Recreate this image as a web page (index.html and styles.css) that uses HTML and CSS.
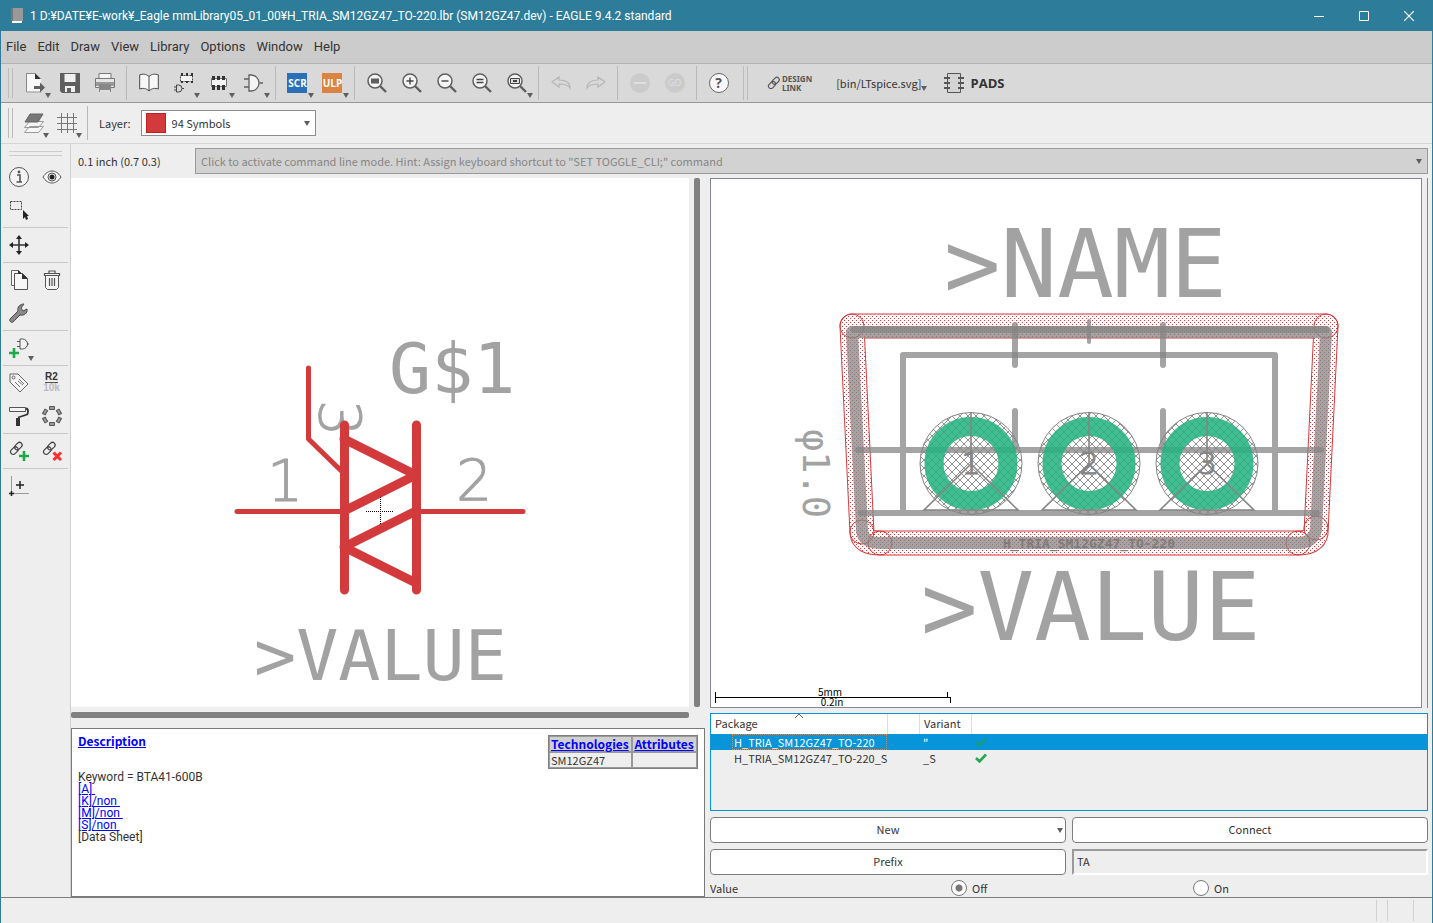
FILE: index.html
```html
<!DOCTYPE html>
<html lang="en">
<head>
<meta charset="utf-8">
<title>EAGLE 9.4.2 standard</title>
<link rel="stylesheet" href="styles.css">
</head>
<body>
<svg class="defs" aria-hidden="true">
  <defs>
    <symbol id="down" viewBox="0 0 6 5"><path d="M0 0h6L3 5z" fill="#5f5f5f"/></symbol>
    <symbol id="lens" viewBox="0 0 20 20"><circle cx="8" cy="8" r="7" fill="#f4f4f4" stroke="#5f5f5f" stroke-width="1.5"/><path d="M13 13l6 6" stroke="#5f5f5f" stroke-width="2.4"/></symbol>
    <symbol id="gate" viewBox="0 0 20 20"><path d="M5 2h2a8 8 0 0 1 0 16H5z" fill="#f4f4f4" stroke="#5f5f5f" stroke-width="1.3"/><path d="M0 6h5M0 14h5M15.500 10H19" stroke="#5f5f5f" stroke-width="1.5"/></symbol>
    <symbol id="chain" viewBox="0 0 16 16"><g fill="none" stroke-width="1.3" stroke="currentColor"><rect x="5.500" y="2.700" width="9" height="5.6" rx="2.8" transform="rotate(-45 10 5.500)"/><rect x="1.200" y="7.500" width="9" height="5.6" rx="2.8" transform="rotate(-45 5.700 10.300)"/></g></symbol>
    <symbol id="tick" viewBox="0 0 12 10"><path d="M1 5l3.500 3.500L11 1.500" fill="none" stroke="currentColor" stroke-width="2.600"/></symbol>
    <pattern id="dots" width="4" height="4" patternUnits="userSpaceOnUse"><path d="M0 0h1v1H0zM2 2h1v1H2z" fill="#d33a3c"/></pattern>
    <pattern id="hatch" width="8" height="8" patternUnits="userSpaceOnUse"><path d="M0 0l8 8M8 0L0 8" stroke="#858585" stroke-width=".9"/></pattern>
  </defs>
</svg>
<div class="window">
  <header class="titlebar">
    <svg width="12" height="16" viewBox="0 0 12 16"><path d="M0 0h12v13H0z" fill="#999"/><path d="M0 0h2v13H0z" fill="#777"/><path d="M1 13h10v2H1z" fill="#fff"/></svg>
    <h1 class="title">1 D:¥DATE¥E-work¥_Eagle mmLibrary05_01_00¥H_TRIA_SM12GZ47_TO-220.lbr (SM12GZ47.dev) - EAGLE 9.4.2 standard</h1>
    <div class="winbtns">
      <button aria-label="Minimize"><svg width="10" height="10"><path d="M0 5.500h10" stroke="#fff"/></svg></button>
      <button aria-label="Maximize"><svg width="10" height="10"><path d="M.5.5h9v9h-9z" fill="none" stroke="#fff"/></svg></button>
      <button aria-label="Close"><svg width="10" height="10"><path d="M0 0l10 10M10 0L0 10" stroke="#fff" stroke-width="1.200"/></svg></button>
    </div>
  </header>
  <nav class="menubar">
    <button>File</button><button>Edit</button><button>Draw</button><button>View</button><button>Library</button><button>Options</button><button>Window</button><button>Help</button>
  </nav>
  <div class="toolbar">
    <span class="grip"></span>
    <button class="tool" aria-label="Open"><svg width="20" height="20" viewBox="0 0 20 20"><path d="M1 .5h10l5 5V19.500H1z" fill="#f8f8f8"/><path d="M1 .5h9M1.500 0v19H16M10 .5" fill="none" stroke="#8a8a8a"/><path d="M10 0l6 6h-6z" fill="#333"/><path d="M9 13h6V9.500l5 5-5 5V16H9z" fill="#5f5f5f"/></svg><svg class="dd"><use href="#down"/></svg></button>
    <button class="tool" aria-label="Save"><svg width="20" height="20" viewBox="0 0 20 20"><path d="M0 0h20v20H2l-2-2z" fill="#5f5f5f"/><path d="M4.500 1h11v8h-11zM5 13h10v6H5z" fill="#f0f0f0"/><path d="M7 15h4v4H7z" fill="#5f5f5f"/></svg></button>
    <button class="tool" aria-label="Print"><svg width="20" height="20" viewBox="0 0 20 20"><path d="M4 .5h12V6H4z" fill="#f4f4f4" stroke="#777"/><path d="M.5 5.500h19v9H.5z" fill="#e5e5e5" stroke="#777"/><path d="M1 9h18v4H1z" fill="#999"/><path d="M4 11h12v8H4z" fill="#888"/><path d="M5 17h10v2H5z" fill="#ddd"/></svg></button>
    <span class="sep"></span>
    <button class="tool" aria-label="Library"><svg width="20" height="20" viewBox="0 0 20 20"><path d="M10 3.500C7 .8 4 .8.7 1.800V16C4 15 7 15 10 18c3-3 6-3 9.300-2V1.800C16 .8 13 .8 10 3.500zV18" fill="#f8f8f8" stroke="#4a4a4a"/></svg></button>
    <button class="tool" aria-label="Device"><svg width="20" height="20" viewBox="0 0 20 20"><path d="M6.500 2.500h12v6h-12z" fill="#f4f4f4" stroke="#444" stroke-dasharray="2 1"/><path d="M7 0h2v3H7zM12 0h2v3h-2zM17 0h2v3h-2zM7 8h2v2H7zM12 8h2v2h-2zM17 8h2v2h-2z" fill="#333"/><path d="M2.500 12h2a3.500 3.500 0 0 1 0 7h-2zM0 14h2M0 17h2M8 15.500h2" fill="none" stroke="#444"/></svg><svg class="dd"><use href="#down"/></svg></button>
    <button class="tool" aria-label="Package"><svg width="20" height="20" viewBox="0 0 20 20"><path d="M2.500 5.500h15v8h-15z" fill="#f4f4f4" stroke="#777"/><path d="M3 3h3v4H3zM8 3h3v4H8zM13 3h3v4h-3zM3 12h3v5H3zM8 12h3v5H8zM13 12h3v5h-3z" fill="#333"/></svg><svg class="dd"><use href="#down"/></svg></button>
    <button class="tool" aria-label="Symbol"><svg width="20" height="20"><use href="#gate"/></svg><svg class="dd"><use href="#down"/></svg></button>
    <span class="sep"></span>
    <button class="tool tag scr">SCR<svg class="dd"><use href="#down"/></svg></button>
    <button class="tool tag ulp">ULP<svg class="dd"><use href="#down"/></svg></button>
    <span class="sep"></span>
    <button class="tool" aria-label="Zoom to fit"><svg width="20" height="20"><use href="#lens"/><path d="M4 5.500h8v5H4z" fill="#5f5f5f"/></svg></button>
    <button class="tool" aria-label="Zoom in"><svg width="20" height="20"><use href="#lens"/><path d="M4.500 8h7M8 4.500v7" stroke="#444" stroke-width="1.400"/></svg></button>
    <button class="tool" aria-label="Zoom out"><svg width="20" height="20"><use href="#lens"/><path d="M4.500 8h7" stroke="#444" stroke-width="1.400"/></svg></button>
    <button class="tool" aria-label="Redraw"><svg width="20" height="20"><use href="#lens"/><path d="M4.500 6.500h7M4.500 9.500h7" stroke="#444" stroke-width="1.400"/></svg></button>
    <button class="tool" aria-label="Zoom select"><svg width="20" height="20"><use href="#lens"/><path d="M3.500 5.500h9v5h-9z" fill="#ddd" stroke="#444"/><path d="M6 7h4v2H6z" fill="#444"/></svg><svg class="dd"><use href="#down"/></svg></button>
    <span class="sep"></span>
    <button class="tool" aria-label="Undo" disabled><svg width="20" height="14" viewBox="0 0 20 14"><path d="M1 6l7-5v3c7 0 11 3 11 8-2-3-5-4-11-4v3z" fill="none" stroke="#b5b5b5" stroke-width="1.200"/></svg></button>
    <button class="tool" aria-label="Redo" disabled><svg width="20" height="14" viewBox="0 0 20 14"><path d="M19 6l-7-5v3C5 4 1 7 1 12c2-3 5-4 11-4v3z" fill="none" stroke="#b5b5b5" stroke-width="1.200"/></svg></button>
    <span class="sep"></span>
    <button class="tool" aria-label="Stop" disabled><svg width="20" height="20"><circle cx="10" cy="10" r="10" fill="#cbcbcb"/><path d="M4 10h12" stroke="#e0e0e0" stroke-width="2"/></svg></button>
    <button class="tool" disabled><span class="go">GO</span></button>
    <span class="sep"></span>
    <button class="tool"><span class="help">?</span></button>
    <span class="grip wide"></span>
    <button class="design"><svg width="14" height="14"><use href="#chain"/></svg><span>DESIGN<br>LINK</span></button>
    <button class="spice">[bin/LTspice.svg]<svg class="dd"><use href="#down"/></svg></button>
    <button class="pads"><svg width="20" height="20" viewBox="0 0 20 20"><path d="M3.500.5h13v19h-13z" fill="#d4d4d4" stroke="#555"/><path d="M0 5h6M0 10h6M0 15h6M14 5h6M14 10h6M14 15h6" stroke="#555" stroke-width="2"/></svg>PADS</button>
  </div>
  <div class="toolbar second">
    <span class="grip"></span>
    <button class="tool" aria-label="Layers"><svg width="20" height="20" viewBox="0 0 20 20"><path d="M.5 19.500l5-6h14l-5 6zM.5 14.500l5-6h14l-5 6z" fill="#f6f6f6" stroke="#999"/><path d="M1 9l5-8h13l-5 8z" fill="#777" stroke="#666"/></svg><svg class="dd"><use href="#down"/></svg></button>
    <button class="tool" aria-label="Grid"><svg width="20" height="20"><path d="M0 4.500h20M0 10.500h20M0 16.500h20M4.500 0v20M10.500 0v20M16.500 0v20" stroke="#777"/></svg><svg class="dd"><use href="#down"/></svg></button>
    <span class="sep"></span>
    <label for="layer">Layer:</label>
    <div class="combo"><span class="swatch"></span><select id="layer"><option>94 Symbols</option></select><svg class="arrow"><use href="#down"/></svg></div>
  </div>
  <div class="body">
    <aside class="side">
      <span class="hgrip"></span>
      <div class="group">
        <button aria-label="Info"><svg width="20" height="20" viewBox="1 1 20 20"><circle cx="11" cy="11" r="9.500" fill="#f4f4f4" stroke="#555"/><path d="M9 9h3v7M8.500 16h5.500" fill="none" stroke="#555" stroke-width="1.600"/><circle cx="11" cy="6" r="1.400" fill="#555"/></svg></button>
        <button aria-label="Show"><svg width="20" height="20" viewBox="0 0 20 20"><path d="M1 10c5-8 13-8 18 0-5 8-13 8-18 0z" fill="#f8f8f8" stroke="#555"/><circle cx="10" cy="10" r="4" fill="none" stroke="#555"/><circle cx="10" cy="10" r="2.500" fill="#222"/></svg></button>
        <button aria-label="Group"><svg width="20" height="20" viewBox="0 0 20 20"><path d="M1.500 1.500h11v8h-11z" fill="none" stroke="#444" stroke-dasharray="2 1"/><path d="M14 10v9l2-2 1 3 2-1-1-3h2z" fill="#222"/></svg></button>
      </div>
      <div class="group">
        <button aria-label="Move"><svg width="20" height="20" viewBox="0 0 20 20"><path d="M2 10h16M10 2v16" stroke="#333" stroke-width="1.600"/><path d="M0 10l4-3v6zM20 10l-4-3v6zM10 0L7 4h6zM10 20l-3-4h6z" fill="#222"/></svg></button>
      </div>
      <div class="group">
        <button aria-label="Copy"><svg width="20" height="20" viewBox="0 0 20 20"><path d="M2.500.5h7l3 3v12h-10z" fill="#f8f8f8" stroke="#666"/><path d="M5.500 3.500h8l5 5v11h-13z" fill="#f8f8f8" stroke="#555"/><path d="M13 3l6 6h-6zM9 0l4 4H9z" fill="#333"/></svg></button>
        <button aria-label="Delete"><svg width="20" height="20" viewBox="0 0 20 20"><path d="M3.500 5.500h13v12l-2 2h-9l-2-2z" fill="#f4f4f4" stroke="#555"/><path d="M2.500 3.500h15v2h-15zM7 3V1h6v2M7.500 8v8M10 8v8M12.500 8v8" fill="none" stroke="#555" stroke-width="1.200"/></svg></button>
        <button aria-label="Change"><svg width="20" height="20" viewBox="0 0 20 20"><path d="M1 16l8-8c-1-4 2-7 6-7l-3 4 2 3 4-2c1 4-3 7-7 6l-7 7c-2 1-4-1-3-3z" fill="#8a8a8a" stroke="#4a4a4a"/></svg></button>
      </div>
      <div class="group">
        <button aria-label="Add"><svg width="20" height="20" viewBox="0 0 20 20"><path d="M11 1h2.500a5 5 0 0 1 0 10H11zM8 3.500h3M8 8.500h3M18 6h2" fill="#f4f4f4" stroke="#555"/><path d="M0 15h10M5 10v10" stroke="#1fa84a" stroke-width="2.600"/></svg><svg class="dd"><use href="#down"/></svg></button>
      </div>
      <div class="group">
        <button aria-label="Name"><svg width="20" height="20" viewBox="0 0 20 20"><path d="M1 1h8l10 10-8 8L1 9z" fill="#f4f4f4" stroke="#666"/><circle cx="4.500" cy="4.500" r="1.500" fill="none" stroke="#666"/><path d="M6 9l5 5M9 8l5 4M10 6l5 5" stroke="#777"/></svg></button>
        <button class="rval"><b>R2</b><span>10k</span></button>
        <button aria-label="Paint"><svg width="20" height="20" viewBox="0 0 20 20"><path d="M.5 1.500h16v4H.5z" fill="#f4f4f4" stroke="#555"/><path d="M17 2.500c3 0 2 5 1 6l-9 3" fill="none" stroke="#333" stroke-width="1.800"/><path d="M7 12h4v8H7z" fill="#333"/></svg></button>
        <button aria-label="Pin swap"><svg width="20" height="20" viewBox="0 0 20 20"><g fill="#999" stroke="#555"><path id="pin" d="M7.500.5h5v3h-5z"/><use href="#pin" transform="rotate(60 10 10)"/><use href="#pin" transform="rotate(120 10 10)"/><use href="#pin" transform="rotate(180 10 10)"/><use href="#pin" transform="rotate(240 10 10)"/><use href="#pin" transform="rotate(300 10 10)"/></g></svg></button>
      </div>
      <div class="group">
        <button aria-label="Connect link"><svg width="20" height="20"><g color="#444"><use href="#chain" width="15" height="15"/></g><path d="M10 15h10M15 10v10" stroke="#1fa84a" stroke-width="2.600"/></svg></button>
        <button aria-label="Break link"><svg width="20" height="20"><g color="#444"><use href="#chain" width="15" height="15"/></g><path d="M11.500 11.500l7.500 7.500M19 11.500l-7.500 7.500" stroke="#ff2d2d" stroke-width="3"/></svg></button>
      </div>
      <div class="group">
        <button aria-label="Origin"><svg width="20" height="20" viewBox="0 0 20 20"><path d="M2.500 0v15M5 17.500h15" stroke="#999"/><path d="M0 17.500h5M2.500 15v5" stroke="#222" stroke-width="1.500"/><path d="M7 9h8M11 5v8" stroke="#222" stroke-width="1.500"/></svg></button>
      </div>
    </aside>
    <main class="main">
      <div class="cmdrow">
        <span class="coord">0.1 inch (0.7 0.3)</span>
        <div class="cmd"><input type="text" aria-label="Command line" placeholder="Click to activate command line mode. Hint: Assign keyboard shortcut to &quot;SET TOGGLE_CLI;&quot; command"><svg class="arrow"><use href="#down"/></svg></div>
      </div>
      <div class="split">
        <section class="col">
          <div class="symrow">
            <svg class="canvas" viewBox="71 178 618 529" role="img" aria-label="Symbol">
              <g class="cad"><text class="l" x="389" y="393">G$1</text><text class="l" x="254" y="680">&gt;VALUE</text>
                <text class="thin" x="267" y="501">1</text><text class="thin" x="456" y="501">2</text><text class="thin" transform="translate(319 400) rotate(90)">3</text></g>
              <g fill="none" stroke="#d33a3c" stroke-linecap="round" stroke-linejoin="round">
                <path d="M344.500 425v165M416.500 425v165" stroke-width="9"/>
                <path d="M344 439l72 36-72 36M416 511l-72 36 72 36" stroke-width="9"/>
                <path d="M308.500 368v71l36 35M237 511.500h107M417 511.500h106" stroke-width="5"/>
              </g>
              <path d="M366 511.500h28M380.500 497v28" stroke="#000" stroke-dasharray="1 1"/>
            </svg>
            <span class="vbar"></span>
          </div>
          <span class="hbar"></span>
          <div class="desc">
            <div class="notes">
              <a class="head" href="#d">Description</a>
              <p>Keyword = BTA41-600B</p>
              <a href="#a">[A]&nbsp;</a><a href="#k">[K]/non&nbsp;</a><a href="#m">[M]/non&nbsp;</a><a href="#s">[S]/non&nbsp;</a>
              <span>[Data Sheet]</span>
            </div>
            <table class="tech"><tr><th><a href="#t">Technologies</a></th><th><a href="#at">Attributes</a></th></tr><tr><td>SM12GZ47</td><td></td></tr></table>
          </div>
        </section>
        <section class="col right">
          <div class="pkgrow">
            <svg class="canvas framed" viewBox="711 179 710 528" role="img" aria-label="Package">
              <g class="cad"><text class="xl" x="944" y="297">&gt;NAME</text><text class="xl" x="921" y="640">&gt;VALUE</text><text class="m" transform="translate(803 429) rotate(90)">φ1.0</text></g>
              <g fill="none" stroke-linejoin="round">
                <path d="M852 326H1326L1316 533Q1314 543 1298 543H880Q863 543 862 533Z" stroke="#d33a3c" stroke-width="25"/>
                <path d="M852 326H1326L1316 533Q1314 543 1298 543H880Q863 543 862 533Z" stroke="#fff" stroke-width="23"/>
                <path d="M852 326H1326L1316 533Q1314 543 1298 543H880Q863 543 862 533Z" stroke="url(#dots)" stroke-width="23"/>
                <g stroke="#d33a3c"><circle cx="852" cy="326" r="12"/><circle cx="1326" cy="326" r="12"/><circle cx="862" cy="532" r="12"/><circle cx="1316" cy="528" r="12"/><circle cx="880" cy="543" r="12"/><circle cx="1298" cy="543" r="12"/></g>
              </g>
              <g fill="none" stroke="#858585" stroke-opacity=".75" stroke-linecap="round" stroke-linejoin="round">
                <path d="M852 332H1326L1316 530Q1313 543 1298 543H880Q863 543 862 530Z" stroke-width="12"/>
                <path d="M854 329.500H1326" stroke-width="7"/>
                <path d="M858 450H1321M861 513H1317M903 513V355H1275V513" stroke-width="6"/>
                <path d="M1015 325v40M1163 325v40M1015 411v36M1163 411v36" stroke-width="6"/>
                <path d="M1089 321v21" stroke-width="4"/>
              </g>
              <g fill="url(#hatch)" stroke="#858585"><circle cx="971" cy="463.500" r="51"/><circle cx="1089" cy="463.500" r="51"/><circle cx="1207" cy="463.500" r="51"/></g>
              <g fill="none" stroke="#26b382" stroke-opacity=".87" stroke-width="19"><circle cx="971" cy="463.500" r="37"/><circle cx="1089" cy="463.500" r="37"/><circle cx="1207" cy="463.500" r="37"/></g>
              <path d="M971 412v52l-47 46h94l-47-46M1089 412v52l-47 46h94l-47-46M1207 412v52l-47 46h94l-47-46" fill="none" stroke="#858585" stroke-width="1.600"/>
              <g class="padno"><text x="971" y="474">1</text><text x="1089" y="474">2</text><text x="1207" y="474">3</text></g>
              <text class="pkgname" x="1089" y="548">H_TRIA_SM12GZ47_TO-220</text>
              <path d="M715.500 692v11M715 697.500h235M947.500 692v5M950.500 697v6" fill="none" stroke="#000"/>
              <g class="scale"><text x="830" y="696">5mm</text><text x="832" y="706">0.2in</text></g>
            </svg>
          </div>
          <div class="list">
            <table>
              <thead><tr><th class="c1">Package<svg class="sort" width="8" height="4"><path d="M0 4l4-4 4 4" fill="none" stroke="#666"/></svg></th><th class="c2"></th><th class="c3">Variant</th><th></th></tr></thead>
              <tbody>
                <tr class="sel"><td><span>H_TRIA_SM12GZ47_TO-220</span></td><td></td><td>"</td><td><svg class="tick" width="12" height="10"><use href="#tick"/></svg></td></tr>
                <tr><td>H_TRIA_SM12GZ47_TO-220_S</td><td></td><td>_S</td><td><svg class="tick" width="12" height="10"><use href="#tick"/></svg></td></tr>
              </tbody>
            </table>
          </div>
          <div class="form">
            <button class="btn">New<svg class="arrow"><use href="#down"/></svg></button>
            <button class="btn">Connect</button>
            <button class="btn">Prefix</button>
            <input class="prefix" type="text" aria-label="Prefix" value="TA">
          </div>
          <fieldset class="value">
            <legend class="vl">Value</legend>
            <label><input type="radio" name="v" checked>Off</label>
            <label><input type="radio" name="v">On</label>
          </fieldset>
        </section>
      </div>
    </main>
  </div>
  <footer class="status"><span></span><span></span><span></span></footer>
</div>
</body>
</html>
```
FILE: styles.css
```css
* { box-sizing: border-box; }
body { margin: 0; font: 11px/16px "Noto Sans CJK JP", "Liberation Sans", sans-serif; color: #333; background: #eee; }
button { font: inherit; color: inherit; background: none; border: 0; padding: 0; margin: 0; }
svg { display: block; flex: none; }
.defs { position: absolute; width: 0; height: 0; }
.window { min-height: 100vh; display: flex; flex-direction: column; border: 1px solid #2d7d9a; border-top: 0; background: #eee; }
.titlebar { height: 31px; background: #2d7d9a; color: #fff; display: flex; align-items: center; padding-left: 10px; gap: 7px; flex: none; }
.title { margin: 0; font: 12px/16px Roboto, "Noto Sans", sans-serif; white-space: nowrap; }
.winbtns { margin-left: auto; display: flex; padding-right: 1px; }
.winbtns button { width: 45px; height: 30px; display: grid; place-items: center; }
.menubar { height: 33px; background: #ccc; border-bottom: 1px solid #b4b4b4; display: flex; align-items: center; gap: 11px; padding-left: 5px; font: 13px/16px Roboto, sans-serif; flex: none; }
.toolbar { height: 39px; background: #d9d9d9; border-bottom: 1px solid #969696; display: flex; align-items: center; padding-left: 7px; flex: none; }
.grip { width: 5px; height: 30px; border: 1px solid #bbb; border-width: 0 1px; margin-right: 4px; flex: none; }
.grip.wide { margin: 0 19px 0 7px; height: 34px; }
.tool { width: 35px; height: 36px; display: grid; place-items: center; position: relative; flex: none; }
.dd { position: absolute; right: 1px; bottom: 3px; width: 6px; height: 5px; }
.sep { width: 1px; height: 34px; background: #b8b8b8; margin: 0 4px; flex: none; }
.tag { font: bold 10px/20px "Open Sans", sans-serif; color: #fff; z-index: 0; }
.tag::before { content: ""; position: absolute; top: 8px; left: 7px; width: 20px; height: 20px; background: #2a70b8; z-index: -1; }
.ulp::before { background: #db8340; }
.go, .help { width: 20px; height: 20px; border-radius: 50%; font: 9px/20px "Open Sans", sans-serif; background: #cbcbcb; color: #e0e0e0; text-align: center; }
.help { background: #f8f8f8; border: 1px solid #666; font: bold 14px/18px "Open Sans", sans-serif; color: #555; }
.design { display: flex; align-items: center; gap: 1px; font: bold 8px/9px "Noto Sans", sans-serif; text-align: left; color: #555; margin-right: 24px; }
.spice { position: relative; padding-right: 5px; margin-right: 17px; height: 30px; }
.spice .dd { right: 0; bottom: 7px; }
.pads { display: flex; align-items: center; gap: 7px; font: bold 13px/20px "Open Sans", sans-serif; }
.second { height: 41px; background: #eee; border-color: #d6d6d6; }
.second .tool { width: 33px; }
.second label { margin: 0 10px 0 7px; }
.combo { width: 175px; height: 26px; border: 1px solid #8c8c8c; background: #fff; display: flex; align-items: center; gap: 6px; padding: 0 5px 0 4px; }
.swatch { width: 20px; height: 20px; background: #d33a3c; border: 1px solid #c02020; flex: none; }
.combo select { appearance: none; border: 0; background: none; font: inherit; color: inherit; flex: 1; padding: 0; }
.arrow { width: 6px; height: 5px; }
.body { flex: 1; display: flex; }
.side { width: 70px; border-right: 1px solid #d0d0d0; padding: 7px 2px 0; flex: none; }
.hgrip { display: block; height: 5px; margin: 0 6px 5px; border: 1px solid #ccc; border-width: 1px 0; }
.group { display: grid; grid-template-columns: 33px 33px; grid-auto-rows: 33px; border-bottom: 1px solid #c8c8c8; margin-bottom: 1px; }
.group:last-child { border: 0; }
.group button { display: grid; place-items: center; position: relative; padding: 0 2px 2px 0; }
.group .dd { right: 2px; bottom: 4px; }
.group .rval { font: bold 10px/10px "Liberation Sans", sans-serif; align-content: center; }
.rval b { border-bottom: 1px solid #555; }
.rval span { color: #bbb; }
.main { flex: 1; min-width: 0; display: flex; flex-direction: column; padding-right: 4px; }
.cmdrow { height: 34px; display: flex; align-items: center; padding-left: 7px; }
.coord { width: 117px; flex: none; }
.cmd { flex: 1; height: 26px; display: flex; align-items: center; border: 1px solid #999; background: #d2d2d2; padding-right: 5px; }
.cmd input { flex: 1; border: 0; background: none; font: inherit; padding: 0 5px; outline: 0; }
.cmd input::placeholder { color: #868686; opacity: 1; }
.split { flex: 1; display: grid; grid-template-columns: 634fr 718fr; gap: 5px; }
.col { display: flex; flex-direction: column; min-width: 0; }
.symrow, .pkgrow { flex: 1; display: flex; min-height: 0; }
.canvas { flex: 1 1 0; min-width: 0; background: #fff; }
.framed { border: 1px solid #828790; }
.pkgrow { border-right: 1px solid #828790; padding-right: 5px; }
.vbar { width: 6px; border-radius: 2px; background: #808080; margin: 0 5px; }
.hbar { height: 6px; border-radius: 2px; background: #808080; margin: 5px 16px 10px 0; }
.desc { height: 169px; border: 1px solid #7a7a7a; background: #fff; display: flex; justify-content: space-between; padding: 6px; }
.desc a { color: #00f; }
.notes { display: flex; flex-direction: column; align-items: flex-start; font: 12px/12px Roboto, sans-serif; }
.notes .head, .tech th { font: bold 12px/12px "Noto Sans CJK JP", sans-serif; }
.notes p { margin: 24px 0 0; }
.tech { border: 1px solid #808080; align-self: flex-start; border-spacing: 0; line-height: 13px; background: #eee; width: 150px; }
.tech th, .tech td { border: 1px solid #999; padding: 0 1px; text-align: left; height: 16px; white-space: nowrap; }
.tech th { background: #d0d0d0; }
.cad text { font-family: "DejaVu Sans Mono", monospace; fill: #a2a2a2; }
.cad .l { font-size: 70px; }
.cad .xl { font-size: 94px; }
.cad .m { font-size: 37px; }
.cad .thin { font-family: "DejaVu Sans", sans-serif; font-weight: 200; font-size: 57px; stroke: #a2a2a2; stroke-width: 1px; stroke-linejoin: round; }
.padno { font: 31px "DejaVu Sans", sans-serif; font-weight: 200; fill: #858585; stroke: #858585; stroke-width: 1px; text-anchor: middle; }
.pkgname { font: bold 13px "DejaVu Sans Mono", monospace; fill: #7f7b7b; text-anchor: middle; }
.scale { font-size: 10px; fill: #000; text-anchor: middle; }
.list { height: 98px; margin-top: 5px; border: 1px solid #0894d8; }
.list table { width: 100%; border-spacing: 0; table-layout: fixed; }
.list th { background: #fff; font-weight: normal; text-align: left; height: 20px; line-height: 14px; padding: 0 4px 2px; border-right: 1px solid #ddd; position: relative; }
.list th:last-child { border: 0; }
.c1 { width: 177px; }
.c2 { width: 32px; }
.c3 { width: 52px; }
.sort { position: absolute; left: 84px; top: 0; }
.list td { height: 16px; line-height: 14px; padding: 0 3px 1px; white-space: nowrap; }
.list td:first-child { padding-left: 23px; }
.sel { background: #0894d8; color: #fff; }
.list .sel td:first-child { padding: 0 1px 0 21px; }
.sel td span { display: block; padding-left: 1px; border: 1px dotted #e08a50; }
.tick { color: #26a84e; }
.sel .tick { color: #189a84; }
.form { display: grid; grid-template-columns: 1fr 1fr; gap: 6px; margin-top: 6px; }
.btn { height: 26px; border: 1px solid #7d7d7d; border-radius: 4px; background: #fff; position: relative; padding-bottom: 2px; }
.btn .arrow { position: absolute; right: 2px; top: 10px; }
.prefix { border: 2px solid; border-color: #9a9a9a #fff #fff #9a9a9a; background: #eee; font: inherit; color: inherit; padding: 0 3px 2px; min-width: 0; }
.value { border: 0; margin: 0; padding: 5px 0 0; height: 22px; display: flex; align-items: center; }
.vl { float: left; width: 241px; padding: 0; }
.value label { flex: none; width: 242px; display: flex; align-items: center; gap: 5px; }
.value input { appearance: none; width: 16px; height: 16px; margin: 0; border: 1px solid #777; border-radius: 50%; background: #fff; }
.value input:checked { background: radial-gradient(#777 0 3px, #fff 4px); }
.status { height: 26px; border-top: 1px solid #7d7d7d; display: flex; justify-content: flex-end; padding: 2px 18px 2px 0; flex: none; }
.status span { border-left: 1px solid #d0d0d0; width: 11px; }
.status span:nth-child(2) { width: 26px; }
.status span:nth-child(3) { width: 1px; }
```
